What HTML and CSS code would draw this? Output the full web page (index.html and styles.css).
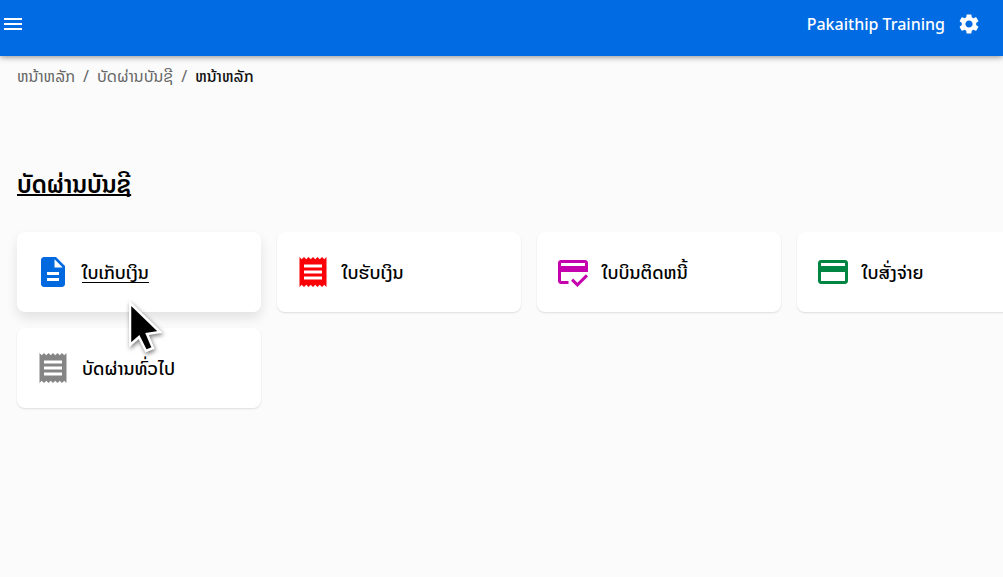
FILE: index.html
```html
<!DOCTYPE html>
<html lang="lo">
<head>
<meta charset="utf-8">
<meta name="viewport" content="width=device-width, initial-scale=1">
<title>ບັດຜ່ານບັນຊີ</title>
<link rel="stylesheet" href="styles.css">
</head>
<body>
<header class="topbar">
  <button class="icon-button" type="button" aria-label="Menu">
    <svg class="bar-icon" viewBox="0 0 24 24"><path d="M3 18h18v-2H3v2zm0-5h18v-2H3v2zm0-7v2h18V6H3z"/></svg>
  </button>
  <div class="account">
    <span class="account-name">Pakaithip Training</span>
    <button class="icon-button" type="button" aria-label="Settings">
      <svg class="bar-icon" viewBox="0 0 24 24"><path d="M19.14 12.94c.04-.3.06-.61.06-.94 0-.32-.02-.64-.07-.94l2.03-1.58c.18-.14.23-.41.12-.61l-1.92-3.32c-.12-.22-.37-.29-.59-.22l-2.39.96c-.5-.38-1.03-.7-1.62-.94l-.36-2.54c-.04-.24-.24-.41-.48-.41h-3.84c-.24 0-.43.17-.47.41l-.36 2.54c-.59.24-1.13.57-1.62.94l-2.39-.96c-.22-.08-.47 0-.59.22L2.74 8.87c-.12.21-.08.47.12.61l2.03 1.58c-.05.3-.09.63-.09.94s.02.64.07.94l-2.03 1.58c-.18.14-.23.41-.12.61l1.92 3.32c.12.22.37.29.59.22l2.39-.96c.5.38 1.03.7 1.62.94l.36 2.54c.05.24.24.41.48.41h3.84c.24 0 .44-.17.47-.41l.36-2.54c.59-.24 1.13-.56 1.62-.94l2.39.96c.22.08.47 0 .59-.22l1.92-3.32c.12-.22.07-.47-.12-.61l-2.01-1.58zM12 15.6c-1.98 0-3.6-1.62-3.6-3.6s1.62-3.6 3.6-3.6 3.6 1.62 3.6 3.6-1.62 3.6-3.6 3.6z"/></svg>
    </button>
  </div>
</header>
<main class="content">
  <nav aria-label="Breadcrumb">
    <ol class="breadcrumb">
      <li><a href="#">ຫນ້າຫລັກ</a></li>
      <li><a href="#">ບັດຜ່ານບັນຊີ</a></li>
      <li><a class="current" href="#" aria-current="page">ຫນ້າຫລັກ</a></li>
    </ol>
  </nav>
  <h1 class="title">ບັດຜ່ານບັນຊີ</h1>
  <div class="cards">
    <a class="card active" href="#">
      <svg class="card-icon blue" viewBox="0 0 24 24"><path d="M14 2H6c-1.100 0-1.990.9-1.990 2L4 20c0 1.100.89 2 1.990 2H18c1.100 0 2-.9 2-2V8l-6-6zm2 16H8v-2h8v2zm0-4H8v-2h8v2zm-3-5V3.500L18.500 9H13z"/></svg>
      <span class="label">ໃບເກັບເງິນ</span>
    </a>
    <a class="card" href="#">
      <svg class="card-icon red" viewBox="0 0 24 24"><path d="M18 17H6v-2h12v2zm0-4H6v-2h12v2zm0-4H6V7h12v2zM3 22l1.500-1.500L6 22l1.500-1.500L9 22l1.500-1.500L12 22l1.500-1.500L15 22l1.500-1.500L18 22l1.500-1.500L21 22V2l-1.500 1.500L18 2l-1.500 1.500L15 2l-1.500 1.500L12 2l-1.500 1.500L9 2 7.500 3.500 6 2 4.500 3.500 3 2v20z"/></svg>
      <span class="label">ໃບຮັບເງິນ</span>
    </a>
    <a class="card" href="#">
      <svg class="card-icon magenta" viewBox="0 0 24 24"><path d="M20 4H4c-1.110 0-2 .89-2 2v12c0 1.110.89 2 2 2h5v-2H4v-6h18V6c0-1.110-.89-2-2-2zm0 4H4V6h16v2zm-5.070 11.170-2.830-2.830-1.410 1.410L14.930 22 22 14.930l-1.410-1.410-5.660 5.650z"/></svg>
      <span class="label">ໃບບິນຕິດຫນີ້</span>
    </a>
    <a class="card" href="#">
      <svg class="card-icon green" viewBox="0 0 24 24"><path d="M20 4H4c-1.110 0-1.990.89-1.990 2L2 18c0 1.110.89 2 2 2h16c1.110 0 2-.89 2-2V6c0-1.110-.89-2-2-2zm0 14H4v-6h16v6zm0-10H4V6h16v2z"/></svg>
      <span class="label">ໃບສັ່ງຈ່າຍ</span>
    </a>
    <a class="card" href="#">
      <svg class="card-icon gray" viewBox="0 0 24 24"><path d="M18 17H6v-2h12v2zm0-4H6v-2h12v2zm0-4H6V7h12v2zM3 22l1.500-1.500L6 22l1.500-1.500L9 22l1.500-1.500L12 22l1.500-1.500L15 22l1.500-1.500L18 22l1.500-1.500L21 22V2l-1.500 1.500L18 2l-1.500 1.500L15 2l-1.500 1.500L12 2l-1.500 1.500L9 2 7.500 3.500 6 2 4.500 3.500 3 2v20z"/></svg>
      <span class="label">ບັດຜ່ານທົ່ວໄປ</span>
    </a>
  </div>
</main>
<svg class="pointer" viewBox="0 0 36 54" aria-hidden="true"><path d="M1 3V45L10 37L17 51L24 48L18 34L31 32Z" fill="#000" stroke="#fff" stroke-width="2.500"/></svg>
</body>
</html>
```
FILE: styles.css
```css
* {
  box-sizing: border-box;
}

body {
  margin: 0;
  min-height: 100vh;
  overflow: hidden;
  background: #fbfbfb;
  color: #000;
  font-family: "Noto Sans", "Noto Sans Lao", "DejaVu Sans", sans-serif;
}

.topbar {
  display: flex;
  align-items: center;
  justify-content: space-between;
  height: 56px;
  padding: 0 22px 8px 1px;
  background: #006be2;
  color: #fff;
  box-shadow: 0 1px 6px rgba(0, 0, 0, 0.45);
}

.account {
  display: flex;
  align-items: center;
  gap: 12px;
}

.account-name {
  font-size: 16px;
  font-weight: 500;
  line-height: 24px;
}

.icon-button {
  display: flex;
  padding: 0;
  border: 0;
  background: none;
  color: inherit;
  cursor: pointer;
}

.bar-icon {
  width: 24px;
  height: 24px;
  fill: currentColor;
}

.content {
  padding: 8px 17px;
}

.breadcrumb {
  display: flex;
  margin: 0;
  padding: 0;
  list-style: none;
  color: #666;
  font-size: 16px;
  line-height: 24px;
}

.breadcrumb li + li::before {
  content: "/";
  padding: 0 8px;
}

.breadcrumb a {
  color: inherit;
  text-decoration: none;
}

.breadcrumb .current {
  color: #111;
  font-weight: 500;
}

.title {
  margin: 80px 0 32px;
  font-size: 24px;
  font-weight: 600;
  line-height: 32px;
  text-decoration: underline;
  text-decoration-thickness: 2px;
  text-decoration-skip-ink: none;
}

.cards {
  display: grid;
  grid-template-columns: repeat(4, 244px);
  gap: 16px;
}

.card {
  display: flex;
  align-items: center;
  gap: 11px;
  height: 80px;
  padding: 0 18px;
  border-radius: 8px;
  background: #fff;
  box-shadow: 0 1px 2px rgba(0, 0, 0, 0.12);
  color: #000;
  font-size: 18px;
  font-weight: 500;
  text-decoration: none;
}

.card.active {
  box-shadow: 0 6px 12px rgba(0, 0, 0, 0.1);
}

.label {
  line-height: 20px;
  border-bottom: 1px solid transparent;
}

.active .label {
  border-bottom-color: #000;
}

.card-icon {
  width: 36px;
  height: 36px;
  fill: currentColor;
}

.blue { color: #0069df; }
.red { color: #fb0007; }
.magenta { color: #c500ad; }
.green { color: #008542; }
.gray { color: #858585; }

.pointer {
  position: absolute;
  top: 300px;
  left: 129px;
  width: 36px;
  height: 54px;
  filter: drop-shadow(1px 2px 2px rgba(0, 0, 0, 0.5));
}
```
